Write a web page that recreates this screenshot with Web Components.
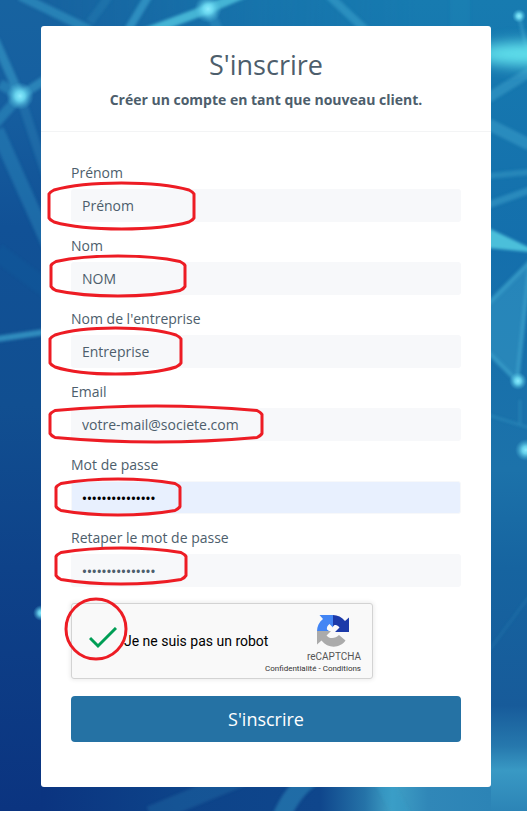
<!DOCTYPE html>
<html lang="fr">
<head>
<meta charset="UTF-8">
<meta name="viewport" content="width=device-width, initial-scale=1">
<title>S'inscrire</title>
<style>
  body {
    margin: 0;
    font-family: "Open Sans", "Noto Sans", sans-serif;
    color: #4d5e6c;
    background: #fff;
  }
</style>
</head>
<body>
<network-backdrop>
  <signup-card heading="S'inscrire" subtitle="Créer un compte en tant que nouveau client.">
    <form-field label="Prénom" name="firstname" value="Prénom" mark="-23 -7 147 48"></form-field>
    <form-field label="Nom" name="lastname" value="NOM" mark="-21 -7 136 42"></form-field>
    <form-field label="Nom de l'entreprise" name="company" value="Entreprise" mark="-22 -8 133 48"></form-field>
    <form-field label="Email" name="email" type="email" value="votre-mail@societe.com" mark="-22 -3 214 38"></form-field>
    <form-field label="Mot de passe" name="password" type="password" value="motdepasse12345" autofilled mark="-16 -3 126 38"></form-field>
    <form-field label="Retaper le mot de passe" name="confirm" type="password" value="motdepasse12345" mark="-16 -7 132 38"></form-field>
    <captcha-box label="Je ne suis pas un robot"></captcha-box>
    <submit-button>S'inscrire</submit-button>
  </signup-card>
</network-backdrop>

<script>
class NetworkBackdrop extends HTMLElement {
  constructor() {
    super();
    this.attachShadow({ mode: "open" });

    this.shadowRoot.innerHTML = `
    <style>
      :host {
        display: block;
        position: relative;
        overflow: hidden;
        box-sizing: border-box;
        padding: 26px 36px 24px 41px;
        margin-bottom: 2px;
      }
      svg {
        position: absolute;
        inset: 0;
        width: 100%;
        height: 100%;
      }
      .content {
        position: relative;
      }
    </style>
    <svg viewBox="0 0 527 811" preserveAspectRatio="none" aria-hidden="true">
      <defs>
        <linearGradient id="left" x1="0" y1="0" x2="0" y2="1">
          <stop offset="0" stop-color="#1763a0"/>
          <stop offset=".12" stop-color="#165fa0"/>
          <stop offset=".28" stop-color="#115196"/>
          <stop offset=".5" stop-color="#114f91"/>
          <stop offset=".7" stop-color="#0e4289"/>
          <stop offset="1" stop-color="#0b3480"/>
        </linearGradient>
        <linearGradient id="right" x1="0" y1="0" x2="0" y2="1">
          <stop offset="0" stop-color="#177bb0"/>
          <stop offset=".3" stop-color="#146fac"/>
          <stop offset=".58" stop-color="#1c72aa"/>
          <stop offset=".7" stop-color="#1664a0"/>
          <stop offset=".87" stop-color="#175b9a"/>
          <stop offset=".92" stop-color="#2678ad"/>
          <stop offset=".95" stop-color="#3999c4"/>
          <stop offset="1" stop-color="#2c84b6"/>
        </linearGradient>
        <linearGradient id="fade">
          <stop offset=".08" stop-color="#000"/>
          <stop offset=".5" stop-color="#bbb"/>
          <stop offset=".8" stop-color="#fff"/>
        </linearGradient>
        <linearGradient id="floor">
          <stop offset="0" stop-color="#0b3480"/>
          <stop offset=".3" stop-color="#0d4389"/>
          <stop offset=".62" stop-color="#0f468c"/>
          <stop offset=".72" stop-color="#2573a8"/>
          <stop offset=".78" stop-color="#3fa0c6"/>
          <stop offset=".86" stop-color="#3087b8"/>
          <stop offset="1" stop-color="#2c84b6"/>
        </linearGradient>
        <radialGradient id="node">
          <stop offset="0" stop-color="#8decff"/>
          <stop offset=".35" stop-color="#71dff5" stop-opacity=".85"/>
          <stop offset="1" stop-color="#49b4d8" stop-opacity="0"/>
        </radialGradient>
        <mask id="m"><rect width="527" height="811" fill="url(#fade)"/></mask>
        <filter id="soft" x="-20%" y="-20%" width="140%" height="140%"><feGaussianBlur stdDeviation="1.5"/></filter>
        <filter id="glow" x="-50%" y="-100%" width="200%" height="300%"><feGaussianBlur stdDeviation="7"/></filter>
      </defs>
      <rect width="527" height="811" fill="url(#left)"/>
      <rect width="527" height="811" fill="url(#right)" mask="url(#m)"/>
      <rect x="41" y="780" width="450" height="31" fill="url(#floor)"/>
      <g filter="url(#soft)" fill="none" stroke="#379bc8">
        <path d="M20-4 90 30" stroke-width="9" opacity=".55"/>
        <path d="M149-5 125 35" stroke-width="8" opacity=".75"/>
        <path d="M110-5 90 22" stroke-width="8" opacity=".2"/>
        <path d="M130 38 208 9 250-9" stroke-width="9" stroke="#45b4d4"/>
        <path d="M208 8 218 30" stroke-width="10" opacity=".4"/>
        <path d="M325-8 372 36" stroke-width="8" opacity=".65"/>
        <path d="M460-5V30" stroke-width="20" opacity=".12"/>
        <path d="M-5 40 20 96 48 78" stroke-width="9" opacity=".6"/>
        <path d="M20 96-5 124M20 96 0 84" stroke-width="10" opacity=".45"/>
        <path d="M20 96 48 180" stroke-width="9" opacity=".25"/>
        <path d="M-3 130 50 248" stroke-width="14" opacity=".35"/>
        <path d="M-3 252 48 290" stroke-width="18" opacity=".06"/>
        <path d="M-3 339 45 332" stroke-width="6" opacity=".8"/>
        <path d="M488 98 530 72" stroke-width="10" opacity=".6"/>
        <path d="M488 124 530 145" stroke-width="12" opacity=".6"/>
        <path d="M488 176 530 172" stroke-width="6" opacity=".5"/>
        <path d="M488 205 530 190" stroke-width="7" opacity=".6"/>
        <path d="M530 265 487 304V352L517 381Z" fill="#379bc8" fill-opacity=".5" stroke="none"/>
        <path d="M488 230 530 250 488 246Z" fill="#4cbfda" stroke="#4cbfda" stroke-width="4"/>
        <path d="M530 262 488 304M488 352 517 381 530 260" stroke-width="4" opacity=".9"/>
        <path d="M519 16 527 50" stroke-width="3" opacity=".7"/>
        <path d="M488 415 530 428M520 400V424" stroke-width="2" opacity=".5"/>
        <path d="M488 652 530 595" stroke-width="2" opacity=".25"/>
        <path d="M260 770 150 815" stroke-width="18" opacity=".2"/>
        <path d="M314 776Q292 790 280 820" stroke-width="18" opacity=".45"/>
        <path d="M380 776 405 820" stroke-width="16" opacity=".45"/>
      </g>
      <ellipse cx="525" cy="54" rx="50" ry="12" fill="#61e0ec" filter="url(#glow)"/>
      <circle cx="208" cy="9" r="14" fill="url(#node)"/>
      <circle cx="20" cy="96" r="14" fill="url(#node)"/>
      <circle cx="519" cy="16" r="7" fill="url(#node)"/>
      <circle cx="518" cy="381" r="9" fill="url(#node)"/>
      <circle cx="526" cy="450" r="11" fill="url(#node)"/>
      <circle cx="41" cy="613" r="8" fill="url(#node)"/>
    </svg>
    <div class="content"><slot></slot></div>
    `;
  }
}
customElements.define("network-backdrop", NetworkBackdrop);

class SignupCard extends HTMLElement {
  constructor() {
    super();
    this.attachShadow({ mode: "open" });

    this.shadowRoot.innerHTML = `
    <style>
      :host {
        display: block;
        background: #fff;
        border-radius: 3px;
      }
      header {
        padding: 20px 30px;
        border-bottom: 1px solid #f3f4f5;
        text-align: center;
      }
      h1 {
        margin: 0;
        font-size: 27px;
        line-height: 38px;
        font-weight: 400;
      }
      p {
        margin: 5px 0 0;
        font-size: 14px;
        line-height: 22px;
        font-weight: 700;
      }
      form {
        display: flex;
        flex-direction: column;
        gap: 14px;
        padding: 31px 30px 45px;
      }
    </style>
    <header>
      <h1></h1>
      <p></p>
    </header>
    <form><slot></slot></form>
    `;
  }
  connectedCallback() {
    this.shadowRoot.querySelector("h1").textContent = this.getAttribute("heading");
    this.shadowRoot.querySelector("p").textContent = this.getAttribute("subtitle");
  }
}
customElements.define("signup-card", SignupCard);

class FormField extends HTMLElement {
  constructor() {
    super();
    this.attachShadow({ mode: "open" });

    this.shadowRoot.innerHTML = `
    <style>
      :host {
        display: block;
      }
      label {
        display: block;
        margin-bottom: 6px;
        font-size: 14px;
        line-height: 20px;
      }
      .control {
        position: relative;
      }
      input {
        display: block;
        box-sizing: border-box;
        width: 100%;
        height: 33px;
        padding: 0 11px;
        border: 0;
        border-radius: 3px;
        background: #f7f8fa;
        color: inherit;
        font: inherit;
        font-size: 14px;
      }
      input[type="password"] {
        font-size: 13px;
        font-weight: 600;
      }
      :host([autofilled]) input {
        border: 1px solid #f7f8fa;
        padding: 0 10px;
        background: #e8f0fe;
        color: #000;
      }
      svg {
        position: absolute;
        overflow: visible;
        pointer-events: none;
      }
    </style>
    <label for="input"></label>
    <div class="control">
      <input id="input">
    </div>
    `;
  }
  connectedCallback() {
    const input = this.shadowRoot.querySelector("input");
    this.shadowRoot.querySelector("label").textContent = this.getAttribute("label");
    input.type = this.getAttribute("type") || "text";
    input.name = this.getAttribute("name");
    input.value = this.getAttribute("value");
    if (this.hasAttribute("mark")) this.drawMark();
  }
  // red outline, mark = "left top width height" relative to the input
  drawMark() {
    const [x, y, w, h] = this.getAttribute("mark").split(" ").map(Number);
    const a = h * 0.25;
    const b = h - a;
    const r = w - 1;
    const d = `M1 ${a}Q2 ${a - 2} 6 ${a - 4}C${w * 0.16} 3 ${w * 0.33} 1 ${w / 2} 1S${w * 0.84} 3 ${r - 5} ${a - 4}Q${r - 1} ${a - 2} ${r} ${a}V${b}Q${r - 1} ${b + 2} ${r - 5} ${b + 4}C${w * 0.84} ${h - 3} ${w * 0.67} ${h - 1} ${w / 2} ${h - 1}S${w * 0.16} ${h - 3} 6 ${b + 4}Q2 ${b + 2} 1 ${b}Z`;
    this.shadowRoot.querySelector(".control").insertAdjacentHTML("beforeend",
      `<svg width="${w}" height="${h}" style="left:${x}px;top:${y}px" aria-hidden="true">
        <path d="${d}" fill="none" stroke="#ed1c24" stroke-width="3" stroke-linejoin="round"/>
      </svg>`);
  }
}
customElements.define("form-field", FormField);

class CaptchaBox extends HTMLElement {
  constructor() {
    super();
    this.attachShadow({ mode: "open" });

    this.shadowRoot.innerHTML = `
    <style>
      :host {
        display: flex;
        align-items: center;
        justify-content: space-between;
        position: relative;
        box-sizing: border-box;
        width: 100%;
        max-width: 302px;
        height: 76px;
        margin-top: 2px;
        padding: 0 11px 0 17px;
        border: 1px solid #d3d3d3;
        border-radius: 3px;
        background: #f9f9f9;
        box-shadow: 0 0 4px 1px rgba(0, 0, 0, .08);
        font-family: Roboto, sans-serif;
        color: #000;
        white-space: nowrap;
      }
      label {
        display: flex;
        align-items: center;
        gap: 7px;
        font-size: 14px;
        line-height: 18px;
      }
      input {
        appearance: none;
        flex: none;
        width: 28px;
        height: 28px;
        margin: 0;
        background: no-repeat center url("data:image/svg+xml,%3Csvg xmlns='http://www.w3.org/2000/svg' width='28' height='28'%3E%3Cpath d='M1 11l8 8L27 1' fill='none' stroke='%23009e55' stroke-width='3'/%3E%3C/svg%3E");
      }
      .brand {
        display: flex;
        flex-direction: column;
        align-items: flex-end;
        width: 56px;
        padding-top: 6px;
        color: #555;
      }
      .brand svg {
        margin-right: 12px;
      }
      .name {
        margin-top: 3px;
        font-size: 10px;
        line-height: 14px;
      }
      .links {
        font-size: 8px;
        line-height: 10px;
        color: #333;
      }
      a {
        color: inherit;
        text-decoration: none;
      }
      .mark {
        position: absolute;
        left: -8px;
        top: -7px;
      }
    </style>
    <label><input type="checkbox" checked><span></span></label>
    <div class="brand">
      <svg width="32" height="32" viewBox="0 0 64 64" aria-hidden="true">
        <path d="M32 0c9 0 18 4 24 12l8-7v29H36l9-9c-3-4-6-5-10-5l-3 3z" fill="#1c3aa9"/>
        <path d="M0 32C0 23 4 14 12 8L5 0h27v25l-7-7c-4 3-6 7-5 11l4 3z" fill="#4285f4"/>
        <path d="M0 32h28l-9 9c5 7 18 7 25-1l13 11C46 67 22 68 9 51l-9 8z" fill="#ababab"/>
      </svg>
      <span class="name">reCAPTCHA</span>
      <span class="links"><a href="#">Confidentialité</a> - <a href="#">Conditions</a></span>
    </div>
    <svg class="mark" width="64" height="64" aria-hidden="true">
      <circle cx="32" cy="32" r="30" fill="none" stroke="#ed1c24" stroke-width="3"/>
    </svg>
    `;
  }
  connectedCallback() {
    this.shadowRoot.querySelector("label span").textContent = this.getAttribute("label");
  }
}
customElements.define("captcha-box", CaptchaBox);

class SubmitButton extends HTMLElement {
  constructor() {
    super();
    this.attachShadow({ mode: "open" });

    this.shadowRoot.innerHTML = `
    <style>
      :host {
        display: block;
        margin-top: 3px;
      }
      button {
        display: block;
        width: 100%;
        height: 46px;
        padding: 0;
        border: 0;
        border-radius: 4px;
        background: #2572a4;
        color: #fff;
        font: inherit;
        font-size: 18px;
      }
    </style>
    <button type="button"><slot></slot></button>
    `;
  }
}
customElements.define("submit-button", SubmitButton);
</script>
</body>
</html>
